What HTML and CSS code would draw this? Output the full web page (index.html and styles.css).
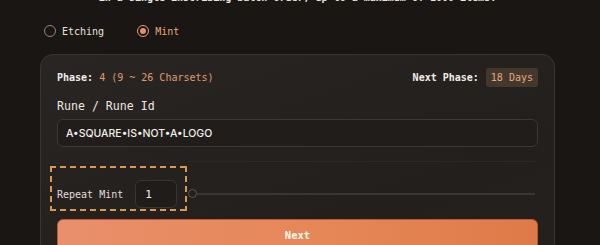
FILE: index.html
```html
<!DOCTYPE html>
<html>
<head>
<meta charset="utf-8">
<link rel="stylesheet" href="styles.css">
</head>
<body>
<div class="page">
  <p class="intro">in a single inscribing batch order, up to a maximum of 1000 items.</p>
  <div class="radios">
    <label class="radio"><span class="dot"></span><span>Etching</span></label>
    <label class="radio active"><span class="dot"></span><span>Mint</span></label>
  </div>
  <div class="card">
    <div class="phase-row">
      <div class="phase"><b>Phase:</b> <span class="accent">4 (9 ~ 26 Charsets)</span></div>
      <div class="next-phase"><b>Next Phase:</b> <span class="badge">18 Days</span></div>
    </div>
    <div class="field-label">Rune / Rune Id</div>
    <div class="input">A•SQUARE•IS•NOT•A•LOGO</div>
    <div class="repeat-row">
      <div class="repeat-group">
        <span class="repeat-label">Repeat Mint</span>
        <span class="num">1</span>
      </div>
      <div class="slider"><span class="thumb"></span><span class="track"></span></div>
    </div>
    <div class="btn">Next</div>
  </div>
</div>
</body>
</html>
```

FILE: styles.css
```css
html, body {
  margin: 0;
  height: 100%;
  overflow: hidden;
  background: #1a1613;
}
body {
  font-family: "DejaVu Sans Mono", "Liberation Mono", monospace;
  font-size: 10px;
  color: #ece7e2;
}
.page {
  width: 515px;
  margin-left: 40px;
}
.intro {
  margin: -9px 0 0 0;
  line-height: 14px;
  text-align: center;
  font-weight: bold;
  color: #e9e4df;
  white-space: nowrap;
}
.radios {
  display: flex;
  gap: 33px;
  margin-top: 19px;
  padding-left: 4px;
  height: 14px;
  align-items: center;
}
.radio {
  display: flex;
  align-items: center;
  gap: 6px;
  color: #e6e1dc;
}
.dot {
  width: 10px;
  height: 10px;
  border-radius: 50%;
  border: 1.5px solid #8d8783;
  display: flex;
  align-items: center;
  justify-content: center;
}
.radio.active { color: #e7a37d; }
.radio.active .dot { border-color: #e3a07c; }
.radio.active .dot::after {
  content: "";
  width: 6px;
  height: 6px;
  border-radius: 50%;
  background: #e88f66;
}
.card {
  margin-top: 16px;
  border: 1px solid #3a3532;
  border-radius: 13px;
  background: linear-gradient(160deg, #292522 0%, #231f1c 60%, #24201d 100%);
  padding: 12px 16px 20px 16px;
  height: 220px;
}
.phase-row {
  display: flex;
  justify-content: space-between;
  align-items: center;
  height: 20px;
}
.phase b, .next-phase b { color: #f1ede9; }
.accent { color: #e39a72; }
.next-phase { display: flex; align-items: center; gap: 7px; }
.badge {
  background: #44382c;
  color: #e8a880;
  border-radius: 3px;
  padding: 0 5px;
  height: 19px;
  line-height: 19px;
}
.field-label {
  margin-top: 11px;
  font-size: 11.6px;
  line-height: 16px;
  color: #ece7e2;
}
.input {
  margin-top: 5px;
  border: 1px solid #3d3835;
  border-radius: 6px;
  background: #211d1b;
  box-sizing: border-box;
  height: 28px;
  padding-left: 8px;
  display: flex;
  align-items: center;
  font-family: Inter, "Noto Sans", sans-serif;
  font-size: 10.5px;
  font-weight: 500;
  color: #f2eeea;
}
.repeat-row {
  margin-top: 19px;
  display: flex;
  align-items: center;
  margin-right: 3px;
}
.repeat-group {
  margin-left: -7px;
  padding: 14px 10px 3px 7px;
  display: flex;
  align-items: center;
  gap: 12px;
  background:
    repeating-linear-gradient(90deg, #d9994f 0 6px, transparent 6px 10px) top left / 100% 2px no-repeat,
    repeating-linear-gradient(90deg, #d9994f 0 6px, transparent 6px 10px) bottom left / 100% 2px no-repeat,
    repeating-linear-gradient(180deg, #d9994f 0 6px, transparent 6px 10px) top left / 2px 100% no-repeat,
    repeating-linear-gradient(180deg, #d9994f 0 6px, transparent 6px 10px) top right / 2px 100% no-repeat;
}
.repeat-label { color: #e3ded9; }
.num {
  width: 42px;
  height: 28px;
  box-sizing: border-box;
  border: 1px solid #3a3532;
  border-radius: 6px;
  background: #201c1a;
  display: flex;
  align-items: center;
  padding-left: 9px;
  font-size: 11px;
  color: #f3efeb;
}
.slider {
  flex: 1;
  display: flex;
  align-items: center;
  margin-top: 10px;
  margin-left: 1px;
  position: relative;
}
.slider::before {
  content: "";
  position: absolute;
  left: 0;
  right: 0;
  top: -28px;
  height: 1px;
  background: rgba(255,255,255,0.04);
}
.thumb {
  width: 7px;
  height: 7px;
  border: 1px solid #5b5652;
  border-radius: 50%;
  background: #231f1c;
  flex: none;
}
.track {
  flex: 1;
  height: 2px;
  background: #3a3633;
}
.btn {
  margin-top: 8px;
  height: 31px;
  border-radius: 6px;
  background: linear-gradient(90deg, #e98f6b 0%, #e58656 60%, #df7a48 100%);
  border: 1px solid #b85a34;
  box-sizing: border-box;
  display: flex;
  align-items: center;
  justify-content: center;
  font-weight: bold;
  font-size: 10.5px;
  color: #fbf4ee;
}
```
